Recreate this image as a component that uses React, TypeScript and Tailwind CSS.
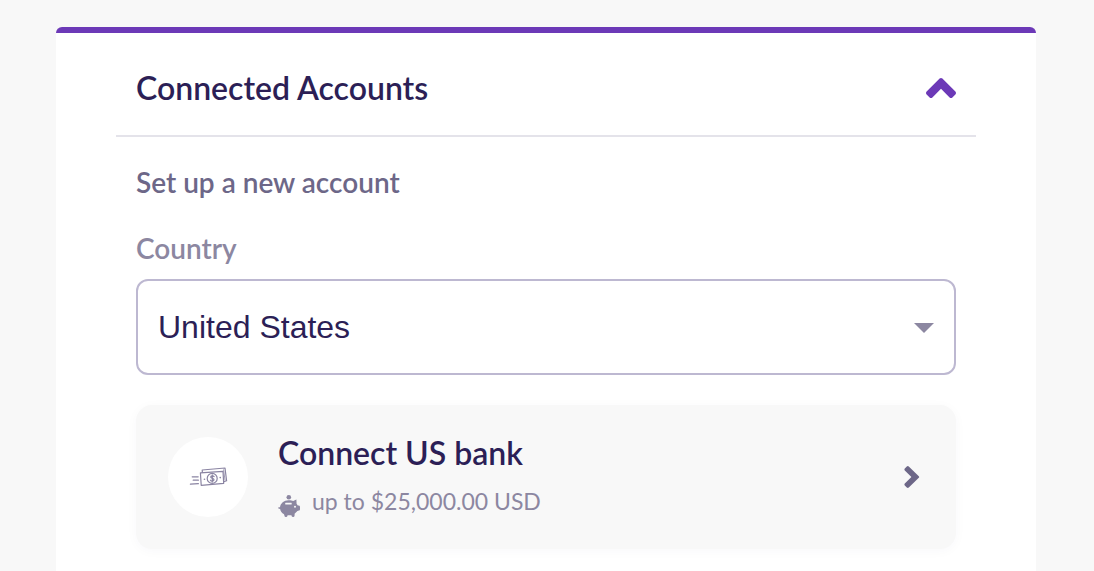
import { useState } from 'react';

const countries = ['United States', 'Canada', 'United Kingdom', 'Australia'];

function ChevronUp({ className = '' }: { className?: string }) {
  return (
    <svg viewBox="0 0 30 20" className={`h-5 w-[30px] ${className}`} fill="currentColor" aria-hidden="true">
      <path d="M13.6 0.6Q15 -0.6 16.4 0.6L29.4 13.6Q30.6 15 29.4 16.4L26.4 19.4Q25 20.6 23.6 19.4L15 10.8L6.4 19.4Q5 20.6 3.6 19.4L0.6 16.4Q-0.6 15 0.6 13.6Z" />
    </svg>
  );
}

function ChevronRight() {
  return (
    <svg viewBox="0 0 16 22" className="h-[22px] w-4" fill="currentColor" aria-hidden="true">
      <path d="M2.8 0.4Q3.8 -0.4 4.8 0.4L14.8 10.2Q15.6 11 14.8 11.8L4.8 21.6Q3.8 22.4 2.8 21.6L0.8 19.6Q0 18.6 0.8 17.6L7.4 11L0.8 4.4Q0 3.4 0.8 2.4Z" />
    </svg>
  );
}

function CashIcon() {
  return (
    <svg viewBox="0 0 40 20" className="h-5 w-10" fill="none" stroke="#8a84a2" strokeWidth="1.2" strokeLinecap="round" strokeLinejoin="round" aria-hidden="true">
      <path d="M12.4 5.8L35 4.3L35.7 16.4L13.2 18.3Z" />
      <path d="M14.4 5.4L14.2 3L37 1L38.6 13.8L35.8 14.7" />
      <path d="M35.6 2.8L37 13.2" strokeWidth="0.8" />
      <circle cx="24.2" cy="11.4" r="5" />
      <path d="M26.1 9.6C25.5 8.7 22.8 8.6 22.7 10.1C22.6 11.6 26 11.1 26 12.8C26 14.4 23.1 14.4 22.5 13.2M24.3 7.9V15" />
      <path d="M16.4 12.2H16.5M32.2 10.6H32.3" strokeWidth="1.6" />
      <path d="M4.2 9.8H10.2M5.2 13.2H10.4M2.4 17.1L10.4 16.7" />
    </svg>
  );
}

function PiggyIcon() {
  return (
    <svg viewBox="0 0 22 22" className="h-[22px] w-[22px]" fill="#8c87a1" aria-hidden="true">
      <circle cx="10.8" cy="2.3" r="2.3" />
      <path fillRule="evenodd" d="M10.5 5.2C13 5.2 14.2 5.6 15.2 6L18.4 4.4L18.6 8.8L19.8 10.6H21Q22 10.8 22 12V14.2Q22 15.4 21 15.6L19.4 16L16.6 18.8V20.5Q16.4 22 15.2 22H14.8Q13.6 22 13.4 20.3H9.6Q9.4 22 8.4 22H7.8Q6.6 22 6.4 20.4L6 19.2C3.8 18 2.4 16 2.1 14L0.4 13.5Q0 12.6 0.7 12.2L2 12.3C2.4 8.4 6 5.2 10.5 5.2ZM7.5 7.8Q6.8 8.8 7.5 9.6H13.4Q14.1 8.8 13.4 7.8ZM17 10.8A1 1 0 1 0 17 12.8A1 1 0 1 0 17 10.8Z" />
    </svg>
  );
}

export default function App() {
  const [open, setOpen] = useState(true);
  const [country, setCountry] = useState('United States');

  return (
    <div className="min-h-screen bg-[#f8f8f8] pt-[27px] pr-[58px] pl-14 font-['Lato',sans-serif]">
      <main className="min-h-[544px] rounded-t-md border-t-6 border-[#6c39b7] bg-white px-[60px] pb-10">
        <h2 className="border-b-2 border-[#e4e3ea]">
          <button
            type="button"
            onClick={() => setOpen(!open)}
            aria-expanded={open}
            className="flex w-full cursor-pointer items-center justify-between px-5 pt-8 pb-6 text-left text-[32px] leading-[46px] font-semibold text-[#2c1f56]"
          >
            Connected Accounts
            <ChevronUp className={open ? 'text-[#6c39b7]' : 'rotate-180 text-[#6c39b7]'} />
          </button>
        </h2>

        {open && (
          <section className="px-5 pt-6">
            <h3 className="text-[28px] leading-[42px] font-semibold text-[#6d6788]">Set up a new account</h3>

            <label htmlFor="country" className="mt-6 block text-[28px] leading-[42px] font-semibold text-[#8c87a1]">
              Country
            </label>
            <div className="relative mt-[10px]">
              <select
                id="country"
                value={country}
                onChange={(e) => setCountry(e.target.value)}
                className="h-24 w-full cursor-pointer appearance-none rounded-xl border-2 border-[#bdb8d1] bg-white px-5 font-['Liberation_Sans',sans-serif] text-[32px] text-[#2c1f56]"
              >
                {countries.map((name) => (
                  <option key={name}>{name}</option>
                ))}
              </select>
              <svg viewBox="0 0 20 10" className="pointer-events-none absolute top-11 right-[22px] h-[10px] w-5" fill="#8c87a1" aria-hidden="true">
                <path d="M0 0H20L10 10Z" />
              </svg>
            </div>

            <button
              type="button"
              className="mt-[30px] flex w-full cursor-pointer items-center rounded-2xl bg-[#f8f8f8] p-8 text-left shadow-[0_2px_12px_rgba(44,31,86,0.03)]"
            >
              <span className="flex size-20 shrink-0 items-center justify-center rounded-full bg-white">
                <CashIcon />
              </span>
              <span className="ml-[30px] flex-1">
                <span className="block text-[32px] leading-8 font-semibold text-[#2c1f56]">Connect US bank</span>
                <span className="mt-4 flex items-end gap-3 text-[23px] leading-8 text-[#8c87a1]">
                  <PiggyIcon />
                  up to $25,000.00 USD
                </span>
              </span>
              <span className="mr-1 text-[#6d6788]">
                <ChevronRight />
              </span>
            </button>
          </section>
        )}
      </main>
    </div>
  );
}
